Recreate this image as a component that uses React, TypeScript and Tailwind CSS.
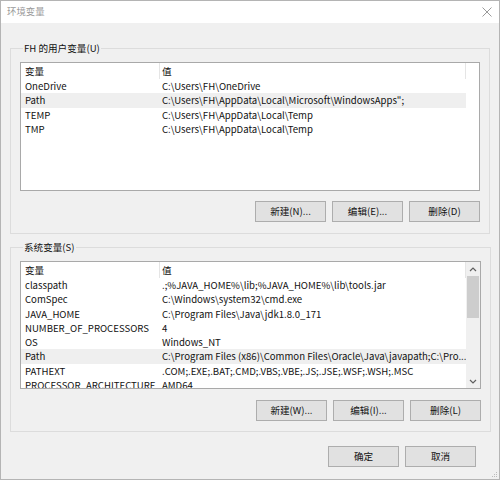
import React from "react";

type Row = { name: string; value: string; sel?: boolean };

const userVars: Row[] = [
  { name: "OneDrive", value: "C:\\Users\\FH\\OneDrive" },
  { name: "Path", value: "C:\\Users\\FH\\AppData\\Local\\Microsoft\\WindowsApps\";", sel: true },
  { name: "TEMP", value: "C:\\Users\\FH\\AppData\\Local\\Temp" },
  { name: "TMP", value: "C:\\Users\\FH\\AppData\\Local\\Temp" },
];

const sysVars: Row[] = [
  { name: "classpath", value: ".;%JAVA_HOME%\\lib;%JAVA_HOME%\\lib\\tools.jar" },
  { name: "ComSpec", value: "C:\\Windows\\system32\\cmd.exe" },
  { name: "JAVA_HOME", value: "C:\\Program Files\\Java\\jdk1.8.0_171" },
  { name: "NUMBER_OF_PROCESSORS", value: "4" },
  { name: "OS", value: "Windows_NT" },
  { name: "Path", value: "C:\\Program Files (x86)\\Common Files\\Oracle\\Java\\javapath;C:\\Pro...", sel: true },
  { name: "PATHEXT", value: ".COM;.EXE;.BAT;.CMD;.VBS;.VBE;.JS;.JSE;.WSF;.WSH;.MSC" },
  { name: "PROCESSOR_ARCHITECTURE", value: "AMD64" },
];

function Btn({ children }: { children: React.ReactNode }) {
  return (
    <div className="w-[71px] h-[21px] bg-[#e1e1e1] border border-[#adadad] flex items-center justify-center text-[9.6px] text-[#111] leading-none">
      {children}
    </div>
  );
}

function ListView({ rows, scroll, h }: { rows: Row[]; scroll?: boolean; h: string }) {
  return (
    <div className={`${h} border border-[#a9a9a9] bg-white flex overflow-hidden`}>
      <div className="flex-1 min-w-0 flex flex-col overflow-hidden">
        <div className="h-[16px] flex shrink-0 text-[9.6px] leading-[16px] text-[#111]">
          <div className="w-[139px] pl-[4px] border-r border-[#e5e5e5] shrink-0">变量</div>
          <div className="w-[306px] pl-[2px] border-r border-[#e5e5e5] shrink-0">值</div>
        </div>
        {rows.map((r) => (
          <div
            key={r.name}
            className={`h-[14.3px] w-[445px] flex shrink-0 text-[9.6px] leading-[14.3px] text-[#111] ${r.sel ? "bg-[#efefef]" : ""}`}
          >
            <div className="w-[139px] pl-[4px] shrink-0 whitespace-nowrap">{r.name}</div>
            <div className="w-[305px] pl-[2px] shrink-0 whitespace-nowrap">{r.value}</div>
          </div>
        ))}
      </div>
      {scroll && (
        <div className="w-[14px] bg-[#f0f0f0] flex flex-col shrink-0">
          <div className="h-[14px] flex items-center justify-center">
            <svg width="8" height="5" viewBox="0 0 8 5">
              <polyline points="1,4 4,1 7,4" fill="none" stroke="#606060" strokeWidth="1.2" />
            </svg>
          </div>
          <div className="h-[42px] mx-[1px] bg-[#cdcdcd]" />
          <div className="flex-1" />
          <div className="h-[14px] flex items-center justify-center">
            <svg width="8" height="5" viewBox="0 0 8 5">
              <polyline points="1,1 4,4 7,1" fill="none" stroke="#606060" strokeWidth="1.2" />
            </svg>
          </div>
        </div>
      )}
    </div>
  );
}

export default function App() {
  return (
    <div
      className="w-[500px] h-[480px] border border-[#b4b4b4] bg-[#f0f0f0] flex flex-col overflow-hidden relative"
      style={{ fontFamily: '"Noto Sans CJK SC", "Noto Sans", sans-serif' }}
    >
      <div className="h-[22px] bg-white flex items-center justify-between pl-[6px] pr-[7px] shrink-0">
        <span className="text-[9.4px] text-[#9a9a9a] leading-none">环境变量</span>
        <svg width="10" height="10" viewBox="0 0 10 10">
          <path d="M0.5 0.5 L9.5 9.5 M9.5 0.5 L0.5 9.5" stroke="#9a9a9a" strokeWidth="1" />
        </svg>
      </div>

      <fieldset className="mx-[9px] mt-[17px] border border-[#dcdcdc] px-[9px] pt-[6px] pb-[11px]">
        <legend className="ml-[3px] px-[1px] text-[9.6px] leading-[16px] text-[#111]">FH 的用户变量(U)</legend>
        <ListView rows={userVars} h="h-[129px]" />
        <div className="flex justify-end gap-[6px] mt-[10px]">
          <Btn>新建(N)...</Btn>
          <Btn>编辑(E)...</Btn>
          <Btn>删除(D)</Btn>
        </div>
      </fieldset>

      <fieldset className="mx-[9px] mt-[5px] border border-[#dcdcdc] px-[9px] pt-[6px] pb-[10px]">
        <legend className="ml-[3px] px-[1px] text-[9.6px] leading-[16px] text-[#111]">系统变量(S)</legend>
        <ListView rows={sysVars} scroll h="h-[128px]" />
        <div className="flex justify-end gap-[6px] mt-[11px]">
          <Btn>新建(W)...</Btn>
          <Btn>编辑(I)...</Btn>
          <Btn>删除(L)</Btn>
        </div>
      </fieldset>

      <div className="flex justify-end gap-[6px] mt-[14px] mr-[23px]">
        <Btn>确定</Btn>
        <Btn>取消</Btn>
      </div>

      <svg className="absolute right-[1px] bottom-[1px]" width="8" height="8" viewBox="0 0 8 8">
        <rect x="6" y="2" width="1" height="1" fill="#bcbcbc" />
        <rect x="4" y="4" width="1" height="1" fill="#bcbcbc" />
        <rect x="6" y="4" width="1" height="1" fill="#bcbcbc" />
        <rect x="2" y="6" width="1" height="1" fill="#bcbcbc" />
        <rect x="4" y="6" width="1" height="1" fill="#bcbcbc" />
        <rect x="6" y="6" width="1" height="1" fill="#bcbcbc" />
      </svg>
    </div>
  );
}
